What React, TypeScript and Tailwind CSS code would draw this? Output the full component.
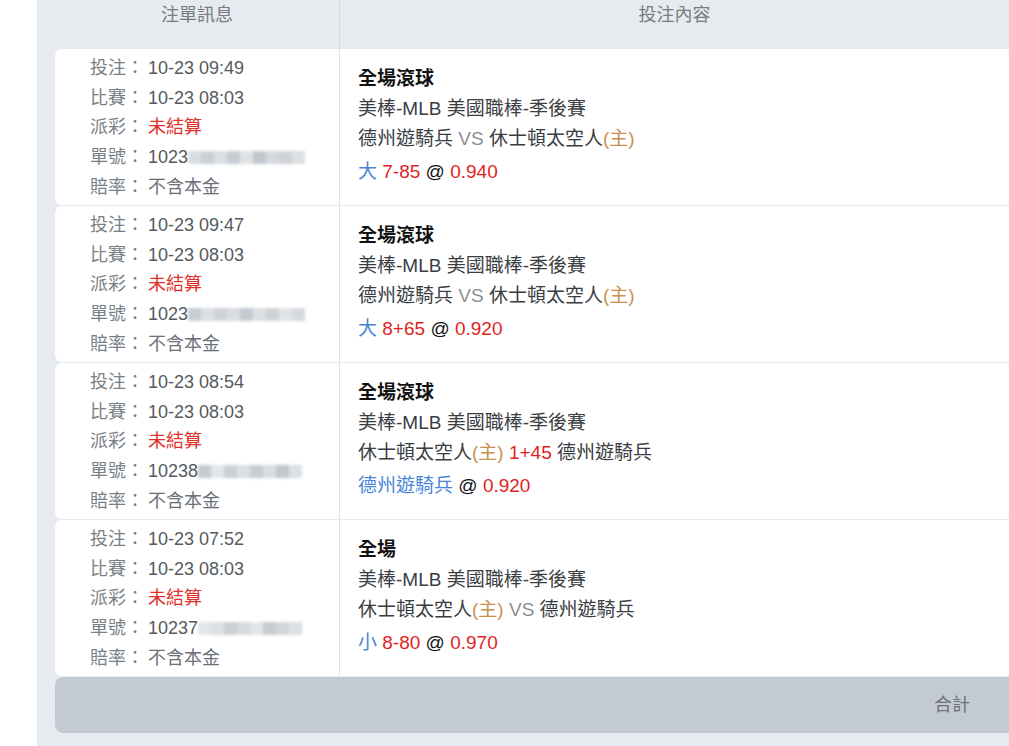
import type { ReactNode } from "react";

type Bet = {
  placed: string;
  match: string;
  prefix: string;
  blur: number[];
  title: string;
  teams: ReactNode;
  pick: ReactNode;
};

const Home = () => <span className="text-[#c8914f]">(主)</span>;
const Red = ({ children }: { children: ReactNode }) => <span className="text-[#e21f1f]">{children}</span>;
const Blue = ({ children }: { children: ReactNode }) => <span className="text-[#4a86d8]">{children}</span>;

const bets: Bet[] = [
  {
    placed: "10-23 09:49",
    match: "10-23 08:03",
    prefix: "1023",
    blur: [0.55, 0.75, 0.5, 0.8, 0.45, 0.9, 0.6, 0.7, 0.5],
    title: "全場滾球",
    teams: (
      <>
        德州遊騎兵 <span className="text-[#8a8f96]">VS</span> 休士頓太空人<Home />
      </>
    ),
    pick: (
      <>
        <Blue>大</Blue> <Red>7-85</Red> <span className="text-[#111]">@</span> <Red>0.940</Red>
      </>
    ),
  },
  {
    placed: "10-23 09:47",
    match: "10-23 08:03",
    prefix: "1023",
    blur: [0.8, 0.5, 0.7, 0.55, 0.85, 0.5, 0.7, 0.45, 0.6],
    title: "全場滾球",
    teams: (
      <>
        德州遊騎兵 <span className="text-[#8a8f96]">VS</span> 休士頓太空人<Home />
      </>
    ),
    pick: (
      <>
        <Blue>大</Blue> <Red>8+65</Red> <span className="text-[#111]">@</span> <Red>0.920</Red>
      </>
    ),
  },
  {
    placed: "10-23 08:54",
    match: "10-23 08:03",
    prefix: "10238",
    blur: [0.85, 0.4, 0.75, 0.5, 0.8, 0.55, 0.9, 0.5],
    title: "全場滾球",
    teams: (
      <>
        休士頓太空人<Home /> <Red>1+45</Red> 德州遊騎兵
      </>
    ),
    pick: (
      <>
        <Blue>德州遊騎兵</Blue> <span className="text-[#111]">@</span> <Red>0.920</Red>
      </>
    ),
  },
  {
    placed: "10-23 07:52",
    match: "10-23 08:03",
    prefix: "10237",
    blur: [0.4, 0.5, 0.75, 0.6, 0.4, 0.8, 0.65, 0.5],
    title: "全場",
    teams: (
      <>
        休士頓太空人<Home /> <span className="text-[#8a8f96]">VS</span> 德州遊騎兵
      </>
    ),
    pick: (
      <>
        <Blue>小</Blue> <Red>8-80</Red> <span className="text-[#111]">@</span> <Red>0.970</Red>
      </>
    ),
  },
];

function Blurred({ shades }: { shades: number[] }) {
  return (
    <span className="inline-flex items-center h-[14px] align-[-1px] blur-[1.5px]">
      {shades.map((o, i) => (
        <span
          key={i}
          className="inline-block h-[13px] w-[13px] bg-[#8c97a3]"
          style={{ opacity: o * 0.6 }}
        />
      ))}
    </span>
  );
}

function InfoLine({ label, children }: { label: string; children: ReactNode }) {
  return (
    <div className="flex h-[29.6px] items-center">
      <span className="w-[58px] text-[#7a7f86]">{label}：</span>
      {children}
    </div>
  );
}

export default function App() {
  return (
    <div
      className="h-[746px] w-[1009px] overflow-hidden bg-white pl-[37px] text-[18px]"
      style={{ fontFamily: '"Liberation Sans", Arial, "Noto Sans CJK TC", sans-serif' }}
    >
      <div className="h-full bg-[#e7eaef] pl-[18px]">
        {/* header */}
        <div className="flex h-[49px] text-[#777c83]">
          <div className="w-[285px] border-r border-[#d6dae0] pt-[1px] text-center leading-[28px]">注單訊息</div>
          <div className="flex-1 pt-[1px] text-center leading-[28px]">投注內容</div>
        </div>

        {/* rows */}
        <div className="flex flex-col gap-px">
          {bets.map((b, i) => (
            <div key={i} className="flex h-[156px] rounded-l-[7px] bg-white">
              <div className="w-[285px] border-r border-[#e2e4e8] pl-[35px] pt-[5px]">
                <InfoLine label="投注">
                  <span className="text-[#555a60]">{b.placed}</span>
                </InfoLine>
                <InfoLine label="比賽">
                  <span className="text-[#555a60]">{b.match}</span>
                </InfoLine>
                <InfoLine label="派彩">
                  <span className="text-[#e0302a]">未結算</span>
                </InfoLine>
                <InfoLine label="單號">
                  <span className="text-[#555a60]">{b.prefix}</span>
                  <Blurred shades={b.blur} />
                </InfoLine>
                <InfoLine label="賠率">
                  <span className="text-[#6b7077]">不含本金</span>
                </InfoLine>
              </div>
              <div className="flex flex-1 flex-col justify-center pb-[4px] pl-[18px] text-[19px] text-[#3a3d42]">
                <div className="leading-[30px] font-bold text-[#111]">{b.title}</div>
                <div className="leading-[30px]">美棒-MLB 美國職棒-季後賽</div>
                <div className="leading-[30px]">{b.teams}</div>
                <div className="mt-[3px] leading-[30px]">{b.pick}</div>
              </div>
            </div>
          ))}
        </div>

        {/* footer */}
        <div className="mt-px flex h-[56px] items-center justify-end rounded-l-[8px] bg-[#c3cad2] pr-[39px] text-[#6c727a]">
          合計
        </div>
      </div>
    </div>
  );
}
